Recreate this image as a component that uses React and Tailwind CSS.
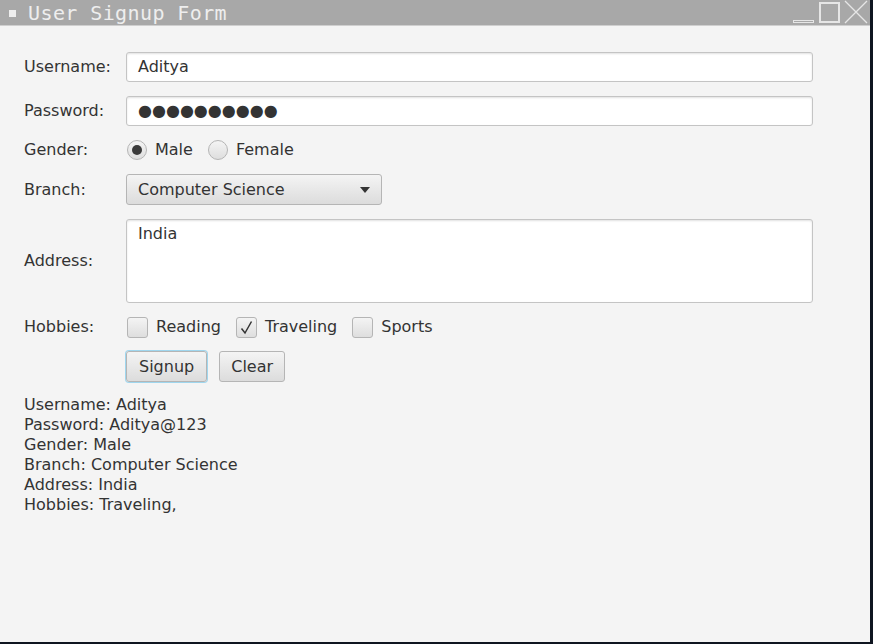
import React, { useState } from 'react';

const font = { fontFamily: '"DejaVu Sans", sans-serif' };

const Label = ({ children }) => (
  <div className="flex items-center text-[16px] leading-[20px] text-[#333333]">{children}</div>
);

const fieldClass =
  'h-[30px] rounded-[3px] border border-[#c4c4c4] bg-white shadow-[inset_0_1px_2px_rgba(0,0,0,0.12)] px-[11px] flex items-center text-[16px] leading-[20px] text-[#333333]';

const btnClass =
  'h-[31px] rounded-[3px] border border-[#b5b5b5] bg-gradient-to-b from-[#f4f4f4] to-[#dcdcdc] px-[11px] text-[16px] leading-[20px] text-[#333333] flex items-center';

const Radio = ({ checked, label }) => (
  <div className="flex items-center gap-[8px]">
    <div className="w-[20px] h-[20px] rounded-full border border-[#b5b5b5] bg-gradient-to-b from-[#f4f4f4] to-[#dedede] flex items-center justify-center">
      {checked && <div className="w-[10px] h-[10px] rounded-full bg-[#3a3a3a]" />}
    </div>
    <span>{label}</span>
  </div>
);

const Check = ({ checked, label }) => (
  <div className="flex items-center gap-[8px]">
    <div className="w-[21px] h-[21px] rounded-[3px] border border-[#b5b5b5] bg-gradient-to-b from-[#f4f4f4] to-[#dedede] flex items-center justify-center">
      {checked && (
        <svg width="15" height="15" viewBox="0 0 15 15">
          <path d="M2.5 8.5 L6 13 L12.5 1.5" stroke="#333" strokeWidth="1.5" fill="none" />
        </svg>
      )}
    </div>
    <span>{label}</span>
  </div>
);

export default function App() {
  const [username] = useState('Aditya');

  return (
    <div className="w-[873px] h-[644px] bg-[#0f1520] overflow-hidden" style={font}>
      <div className="w-[870px] h-[642px] flex flex-col bg-[#f4f4f4]">
        {/* title bar */}
        <div className="h-[26px] bg-[#a8a8a8] flex items-center border-b border-[#cfcfcf]">
          <div className="w-[7px] h-[7px] bg-[#eeeeee] ml-[9px] mt-[2px]" />
          <span
            className="ml-[12px] text-[20px] leading-[24px] text-[#eeeeee] tracking-[0.4px]"
            style={{ fontFamily: '"DejaVu Sans Mono", monospace' }}
          >
            User Signup Form
          </span>
          <div className="ml-auto flex items-end h-full pr-[2px]">
            <div className="w-[21px] h-[3px] border border-[#e6e6e6] mb-[2px] mr-[5px]" />
            <div className="w-[21px] h-[21px] border-2 border-[#e6e6e6] mb-[2px] mr-[4px]" />
            <svg width="24" height="24" viewBox="0 0 24 24" className="mb-[1px]">
              <path d="M1 1 L23 23 M23 1 L1 23" stroke="#e6e6e6" strokeWidth="1.3" />
            </svg>
          </div>
        </div>

        {/* form */}
        <div className="pl-[24px] pr-[57px] pt-[26px] grid grid-cols-[102px_1fr] gap-y-[14px] text-[16px] leading-[20px] text-[#333333]">
          <Label>Username:</Label>
          <div className={fieldClass}>{username}</div>

          <Label>Password:</Label>
          <div className={fieldClass}>
            <span>●●●●●●●●●●</span>
          </div>

          <Label>Gender:</Label>
          <div className="h-[20px] flex items-center gap-[15px] pl-[1px]">
            <Radio checked label="Male" />
            <Radio label="Female" />
          </div>

          <Label>Branch:</Label>
          <div className="flex">
            <div className={`${btnClass} h-[30px] w-[256px] justify-between`}>
              <span>Computer Science</span>
              <svg width="10" height="6" viewBox="0 0 10 6">
                <path d="M0 0 L10 0 L5 6 Z" fill="#333" />
              </svg>
            </div>
          </div>

          <Label>Address:</Label>
          <div className="h-[84px] rounded-[3px] border border-[#c4c4c4] bg-white shadow-[inset_0_1px_2px_rgba(0,0,0,0.12)] px-[11px] pt-[4px]">
            India
          </div>

          <Label>Hobbies:</Label>
          <div className="h-[20px] flex items-center gap-[15px] pl-[1px]">
            <Check label="Reading" />
            <Check checked label="Traveling" />
            <Check label="Sports" />
          </div>

          <div />
          <div className="flex gap-[12px]">
            <button className={`${btnClass} px-[12px] border-[#039ed3] shadow-[0_0_0_1px_#9fd6ee]`}>Signup</button>
            <button className={`${btnClass} px-[10px]`}>Clear</button>
          </div>
        </div>

        <div className="pl-[24px] pt-[13px] text-[16px] leading-[20px] text-[#333333]">
          <div>Username: Aditya</div>
          <div>Password: Aditya@123</div>
          <div>Gender: Male</div>
          <div>Branch: Computer Science</div>
          <div>Address: India</div>
          <div>Hobbies: Traveling,</div>
        </div>
      </div>
    </div>
  );
}
